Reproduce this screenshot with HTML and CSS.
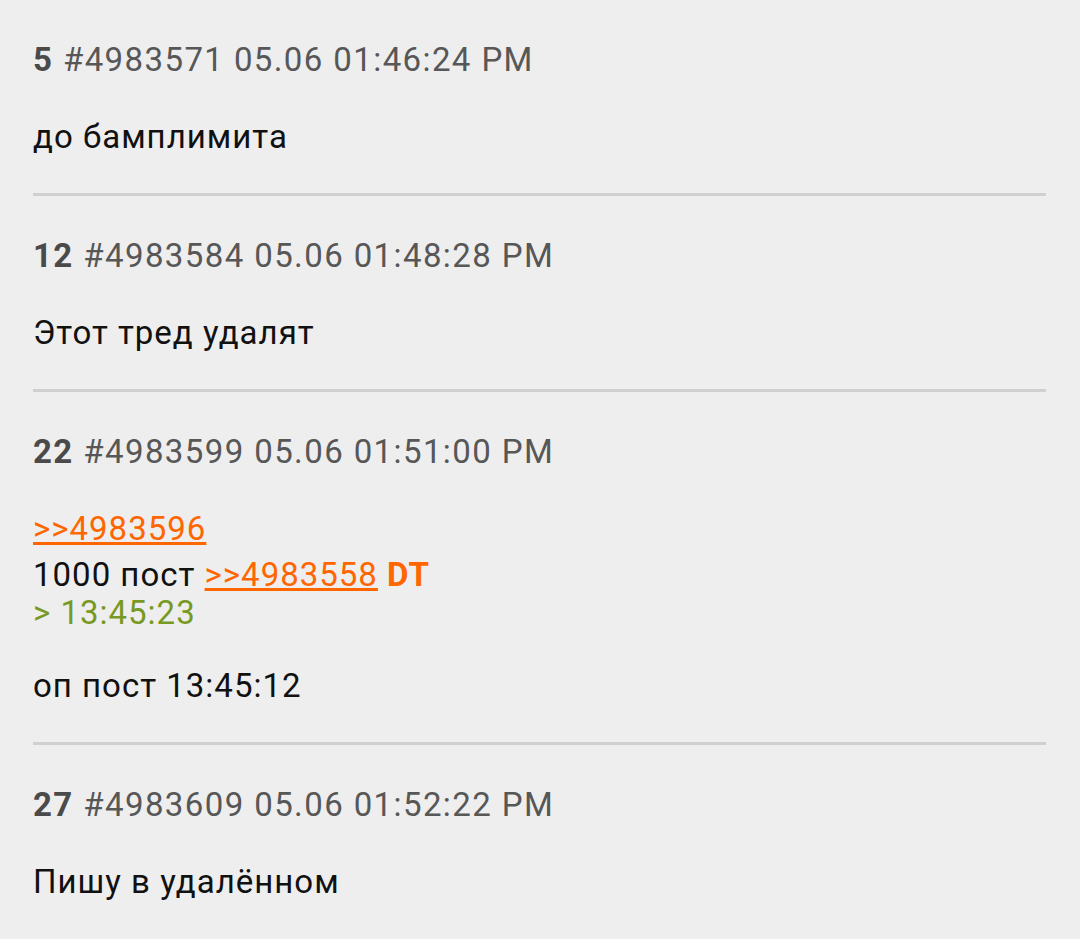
FILE: index.html
```html
<!DOCTYPE html>
<html lang="ru">
<head>
    <meta charset="UTF-8">
    <meta name="viewport" content="width=device-width, initial-scale=1.0">
    <title>Тред</title>
    <link rel="stylesheet" href="styles.css">
</head>
<body>
    <div class="thread">
        <div class="post">
            <div class="post-head"><span class="num">5</span> <span class="id">#4983571</span> <span class="date">05.06 01:46:24 PM</span></div>
            <div class="post-body">
                <div class="line">до бамплимита</div>
            </div>
        </div>

        <div class="post">
            <div class="post-head"><span class="num">12</span> <span class="id">#4983584</span> <span class="date">05.06 01:48:28 PM</span></div>
            <div class="post-body">
                <div class="line">Этот тред удалят</div>
            </div>
        </div>

        <div class="post">
            <div class="post-head"><span class="num">22</span> <span class="id">#4983599</span> <span class="date">05.06 01:51:00 PM</span></div>
            <div class="post-body">
                <div class="line first"><a class="reply" href="#">&gt;&gt;4983596</a></div>
                <div class="line">1000 пост <a class="reply" href="#">&gt;&gt;4983558</a> <span class="mark">DT</span></div>
                <div class="line quote">&gt; 13:45:23</div>
                <div class="line empty"></div>
                <div class="line">оп пост 13:45:12</div>
            </div>
        </div>

        <div class="post last">
            <div class="post-head"><span class="num">27</span> <span class="id">#4983609</span> <span class="date">05.06 01:52:22 PM</span></div>
            <div class="post-body">
                <div class="line">Пишу в удалённом</div>
            </div>
        </div>
    </div>
</body>
</html>
```

FILE: styles.css
```css
body {
    margin: 0;
    background-color: #eeeeee;
    font-family: Roboto, "Noto Sans", sans-serif;
    font-size: 33px;
    color: #111;
}
.thread {
    padding: 0 34px 0 33px;
}
.post {
    padding-top: 41px;
    padding-bottom: 37px;
    border-bottom: 3px solid #d0d0d0;
}
.post.last {
    border-bottom: none;
}
.post-head {
    height: 38px;
    line-height: 38px;
    letter-spacing: 1.4px;
    white-space: nowrap;
    color: #575757;
}
.num {
    font-weight: bold;
    color: #4a4a4a;
}
.post-body {
    margin-top: 39px;
    line-height: 38px;
    letter-spacing: 1px;
}
.line.first {
    margin-bottom: 8px;
}
.line.empty {
    height: 35px;
}
.reply {
    color: #ff6600;
    text-decoration: underline;
}
.mark {
    color: #ff6600;
    font-weight: bold;
}
.quote {
    color: #789922;
}
```
